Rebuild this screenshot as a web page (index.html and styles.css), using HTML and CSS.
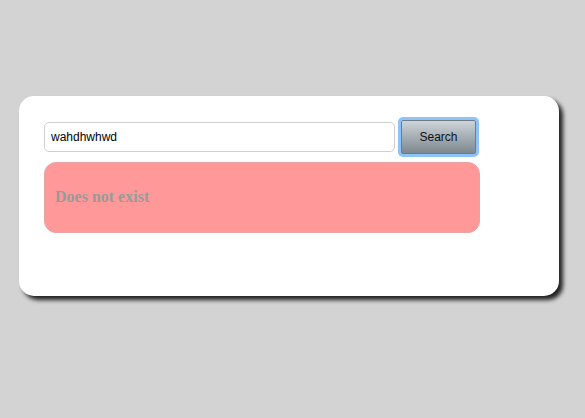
FILE: index.html
```html
<!DOCTYPE html>
<html>
<head>
<meta charset="utf-8">
<link rel="stylesheet" href="styles.css">
</head>
<body>
<div class="card">
  <div class="search-row">
    <input class="search-input" type="text" value="wahdhwhwd">
    <button class="search-btn">Search</button>
  </div>
  <div class="error-box">Does not exist</div>
</div>
</body>
</html>
```
FILE: styles.css
```css
html, body {
  margin: 0;
  padding: 0;
  background: #d3d3d3;
  width: 585px;
  height: 418px;
  overflow: hidden;
}
body {
  padding-top: 96px;
  padding-left: 19px;
  box-sizing: border-box;
}
.card {
  width: 540px;
  height: 200px;
  box-sizing: border-box;
  background: #fff;
  border-radius: 15px;
  box-shadow: 4px 4px 4px #222;
  padding: 21px 25px 0 25px;
}
.search-row {
  display: flex;
  align-items: center;
  gap: 3px;
}
.search-input {
  width: 351px;
  height: 30px;
  box-sizing: border-box;
  border: 1px solid #cfcfcf;
  border-radius: 5px;
  padding: 0 6px;
  font-family: "Liberation Sans", Arial, sans-serif;
  font-size: 12px;
  color: #000;
  outline: none;
  margin: 4px 0;
}
.search-btn {
  width: 81px;
  height: 40px;
  box-sizing: border-box;
  border: 3px solid #8cc3fa;
  border-radius: 5px;
  background: linear-gradient(#d0d7dc, #7b858d);
  box-shadow: inset 0 0 0 1px #6f7a84;
  font-family: "Liberation Sans", Arial, sans-serif;
  font-size: 12px;
  color: #111;
  padding: 0;
}
.error-box {
  margin-top: 5px;
  width: 436px;
  height: 71px;
  box-sizing: border-box;
  background: #ff9999;
  border: 1px solid #e9a3a3;
  border-radius: 12px;
  display: flex;
  align-items: center;
  padding-left: 10px;
  padding-bottom: 1px;
  font-family: "Liberation Serif", "Times New Roman", serif;
  font-weight: bold;
  font-size: 16px;
  color: #999;
}
```
